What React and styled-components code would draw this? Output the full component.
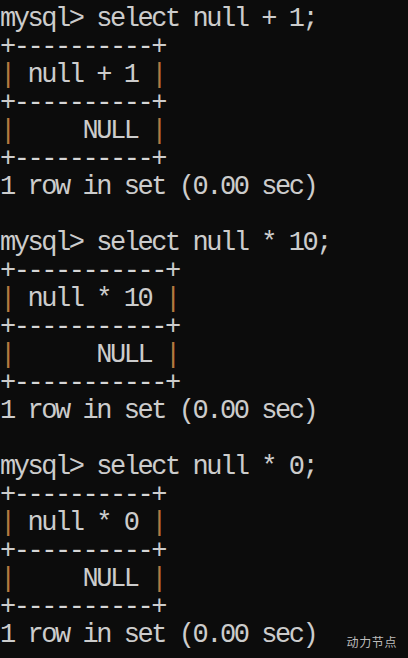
import React from "react";
import styled, { createGlobalStyle } from "styled-components";

const Global = createGlobalStyle`
  html, body { margin: 0; padding: 0; background: #0c0c0c; }
  #root { width: 408px; height: 658px; }
`;

const Screen = styled.div`
  position: relative;
  box-sizing: border-box;
  width: 408px;
  height: 658px;
  overflow: hidden;
  background: #0c0c0c;
  padding-top: 5px;
  font-family: "Liberation Mono", "DejaVu Sans Mono", monospace;
  font-size: 27px;
  letter-spacing: -2.45px;
  color: #cccccc;
`;

const Line = styled.div`
  height: 28px;
  line-height: 28px;
  white-space: pre;
`;

const Pipe = styled.span`
  color: #b5793f;
`;

const Dashes = styled.span`
  color: #d6d6d6;
`;

const Watermark = styled.div`
  position: absolute;
  right: 11px;
  bottom: 8px;
  font-family: "Noto Sans CJK SC", "Noto Sans", sans-serif;
  font-size: 12px;
  letter-spacing: 0.6px;
  color: #bdbdbd;
`;

const queries = [
  { expr: "null + 1", value: "NULL" },
  { expr: "null * 10", value: "NULL" },
  { expr: "null * 0", value: "NULL" },
];

function TermLine({ text }) {
  const parts = text.split("|");
  return (
    <Line>
      {parts.map((p, i) => (
        <React.Fragment key={i}>
          {i > 0 && <Pipe>|</Pipe>}
          {p}
        </React.Fragment>
      ))}
    </Line>
  );
}

function BorderLine({ width }) {
  return (
    <Line>
      +<Dashes>{"-".repeat(width)}</Dashes>+
    </Line>
  );
}

export default function App() {
  const rows = [];
  queries.forEach((q, qi) => {
    const w = q.expr.length + 2;
    const header = "| " + q.expr + " |";
    const value = "| " + q.value.padStart(q.expr.length) + " |";
    rows.push(
      <TermLine key={`p${qi}`} text={`mysql> select ${q.expr};`} />,
      <BorderLine key={`b1${qi}`} width={w} />,
      <TermLine key={`h${qi}`} text={header} />,
      <BorderLine key={`b2${qi}`} width={w} />,
      <TermLine key={`v${qi}`} text={value} />,
      <BorderLine key={`b3${qi}`} width={w} />,
      <TermLine key={`s${qi}`} text="1 row in set (0.00 sec)" />
    );
    if (qi < queries.length - 1) rows.push(<TermLine key={`e${qi}`} text="" />);
  });
  return (
    <>
      <Global />
      <Screen>
        {rows}
        <Watermark>动力节点</Watermark>
      </Screen>
    </>
  );
}
